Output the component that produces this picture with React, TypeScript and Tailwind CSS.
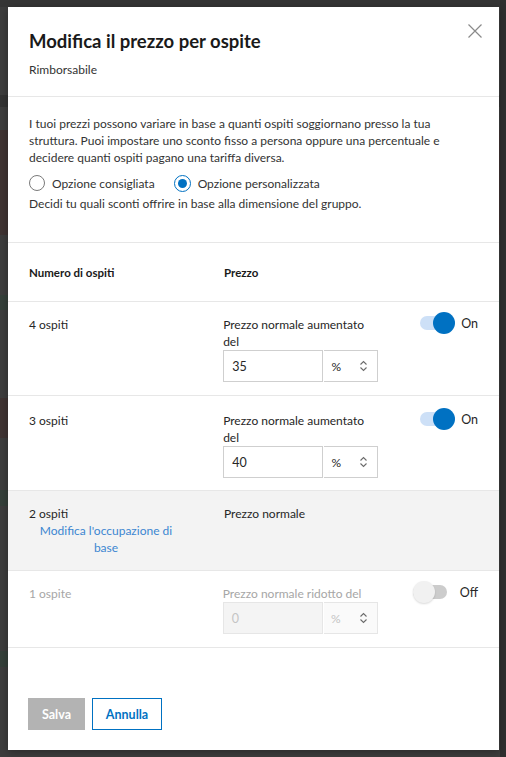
import React from "react";

const font = { fontFamily: 'Lato, "Noto Sans", Arial, sans-serif' };

function Chevrons() {
  return (
    <svg width="9" height="12" viewBox="0 0 9 12" fill="none" stroke="#6b6b6b" strokeWidth="1.1">
      <path d="M1.5 4.5 L4.5 1.5 L7.5 4.5" />
      <path d="M1.5 7.5 L4.5 10.5 L7.5 7.5" />
    </svg>
  );
}

function PriceInput({ value, disabled }: { value: string; disabled?: boolean }) {
  return (
    <div className="flex h-[32px]">
      <div
        className={`w-[101px] h-full border flex items-center pl-[8px] text-[12.5px] ${
          disabled ? "bg-[#f4f4f4] border-[#e6e6e6] text-[#c4c4c4]" : "bg-white border-[#cfcfcf] text-[#262626]"
        }`}
      >
        {value}
      </div>
      <div
        className={`w-[54px] h-full border border-l-0 ml-[1px] flex items-center justify-between pl-[7px] pr-[9px] ${
          disabled ? "bg-[#fafafa] border-[#e6e6e6] text-[#c4c4c4]" : "bg-white border-[#cfcfcf] text-[#262626]"
        }`}
      >
        <span className="text-[12px]">%</span>
        <Chevrons />
      </div>
    </div>
  );
}

function ToggleOn() {
  return (
    <div className="flex items-center">
      <div className="relative w-[35px] h-[22px] flex items-center">
        <div className="w-[34px] h-[14px] rounded-full bg-[#cde0f7]" />
        <div className="absolute right-0 top-0 w-[22px] h-[22px] rounded-full bg-[#0071c2]" />
      </div>
      <span className="ml-[6px] text-[#262626] text-[12.5px]">On</span>
    </div>
  );
}

function ToggleOff() {
  return (
    <div className="flex items-center">
      <div className="relative w-[34px] h-[22px] flex items-center">
        <div className="w-[34px] h-[14px] rounded-full bg-[#cccccc]" />
        <div className="absolute left-0 top-0 w-[22px] h-[22px] rounded-full bg-[#f1f1f1] shadow-[0_1px_2px_rgba(0,0,0,0.15)]" />
      </div>
      <span className="ml-[13px] text-[#262626] text-[12.5px]">Off</span>
    </div>
  );
}

export default function App() {
  return (
    <div className="relative w-[506px] h-[757px] bg-[#3d3d3d] overflow-hidden text-[12px] leading-[17px]" style={font}>
      {/* faint page content behind the overlay */}
      <div className="absolute inset-0 flex flex-col pointer-events-none">
        <div className="h-[7px] bg-[#353535]" />
        <div className="h-[88px]" />
        <div className="h-[12px] bg-[#333333]" />
        <div className="h-[23px]" />
        <div className="h-[105px] bg-[#3f3433]" />
        <div className="h-[60px]" />
        <div className="h-[15px] bg-[#35403a]" />
        <div className="h-[88px]" />
        <div className="h-[40px] bg-[#3f3433]" />
        <div className="h-[52px]" />
        <div className="h-[16px] bg-[#35403a]" />
        <div className="h-[145px]" />
        <div className="h-[16px] bg-[#35403a]" />
      </div>
      <div className="absolute right-0 top-0 w-[6px] h-full bg-[#2f2f2f]" />

      <div className="relative pl-[8px] pt-[7px]">
        <div className="w-[491px] h-[743px] bg-white flex flex-col shadow-[0_2px_8px_rgba(0,0,0,0.3)]">
          {/* header */}
          <div className="relative h-[90px] border-b border-[#e7e7e7] px-[21px] pt-[22px]">
            <h1 className="text-[18.5px] leading-[24px] font-bold text-[#1a1a1a]">Modifica il prezzo per ospite</h1>
            <p className="mt-[8px] text-[12px] text-[#333]">Rimborsabile</p>
            <button className="absolute right-[17px] top-[17px] w-[14px] h-[14px]">
              <svg width="14" height="14" viewBox="0 0 14 14" stroke="#8a8a8a" strokeWidth="1.2">
                <path d="M0.5 0.5 L13.5 13.5 M13.5 0.5 L0.5 13.5" />
              </svg>
            </button>
          </div>

          {/* intro */}
          <div className="h-[146px] border-b border-[#e7e7e7] px-[21px] pt-[18px] text-[#333]">
            <p className="pr-[8px]">
              I tuoi prezzi possono variare in base a quanti ospiti soggiornano presso la tua struttura. Puoi impostare
              uno sconto fisso a persona oppure una percentuale e decidere quanti ospiti pagano una tariffa diversa.
            </p>
            <div className="flex items-center mt-[9px] h-[16px]">
              <span className="w-[16px] h-[16px] rounded-full border-[1.5px] border-[#7a7a7a] box-border" />
              <span className="ml-[7px]">Opzione consigliata</span>
              <span className="ml-[19px] w-[17px] h-[17px] rounded-full border-[1.5px] border-[#0071c2] flex items-center justify-center">
                <span className="w-[9px] h-[9px] rounded-full bg-[#0071c2]" />
              </span>
              <span className="ml-[7px]">Opzione personalizzata</span>
            </div>
            <p className="mt-[4px]">Decidi tu quali sconti offrire in base alla dimensione del gruppo.</p>
          </div>

          {/* table header */}
          <div className="h-[59px] border-b border-[#e7e7e7] flex items-center px-[21px] font-bold text-[11.5px] text-[#1a1a1a]">
            <div className="w-[195px]">Numero di ospiti</div>
            <div>Prezzo</div>
          </div>

          {/* 4 ospiti */}
          <div className="h-[94px] border-b border-[#e7e7e7] flex px-[21px] pt-[14px] text-[#262626]">
            <div className="w-[195px]">4 ospiti</div>
            <div className="w-[155px]">
              <div className="w-[150px]">Prezzo normale aumentato del</div>
              <PriceInput value="35" />
            </div>
            <div className="ml-[42px] -mt-[4px]">
              <ToggleOn />
            </div>
          </div>

          {/* 3 ospiti */}
          <div className="h-[95px] border-b border-[#e7e7e7] flex px-[21px] pt-[16px] text-[#262626]">
            <div className="w-[195px]">3 ospiti</div>
            <div className="w-[155px]">
              <div className="w-[150px]">Prezzo normale aumentato del</div>
              <PriceInput value="40" />
            </div>
            <div className="ml-[42px] -mt-[4px]">
              <ToggleOn />
            </div>
          </div>

          {/* 2 ospiti */}
          <div className="h-[80px] border-b border-[#e7e7e7] bg-[#f3f3f3] flex px-[21px] pt-[14px] text-[#262626]">
            <div className="w-[195px]">
              <div>2 ospiti</div>
              <div className="w-[154px] px-[7px] text-center text-[#3c86d1]">Modifica l'occupazione di base</div>
            </div>
            <div>Prezzo normale</div>
          </div>

          {/* 1 ospite */}
          <div className="h-[77px] border-b border-[#e7e7e7] flex px-[21px] pt-[14px] text-[#a6a6a6]">
            <div className="w-[195px]">1 ospite</div>
            <div className="w-[155px]">
              <div>Prezzo normale ridotto del</div>
              <PriceInput value="0" disabled />
            </div>
            <div className="ml-[35px] -mt-[4px]">
              <ToggleOff />
            </div>
          </div>

          {/* footer */}
          <div className="flex gap-[7px] px-[20px] pt-[50px]">
            <button className="w-[57px] h-[32px] bg-[#b3b3b3] text-white font-bold text-[12.5px]">Salva</button>
            <button className="w-[70px] h-[32px] border border-[#0071c2] text-[#0071c2] font-bold text-[12.5px] bg-white">
              Annulla
            </button>
          </div>
        </div>
      </div>
    </div>
  );
}
